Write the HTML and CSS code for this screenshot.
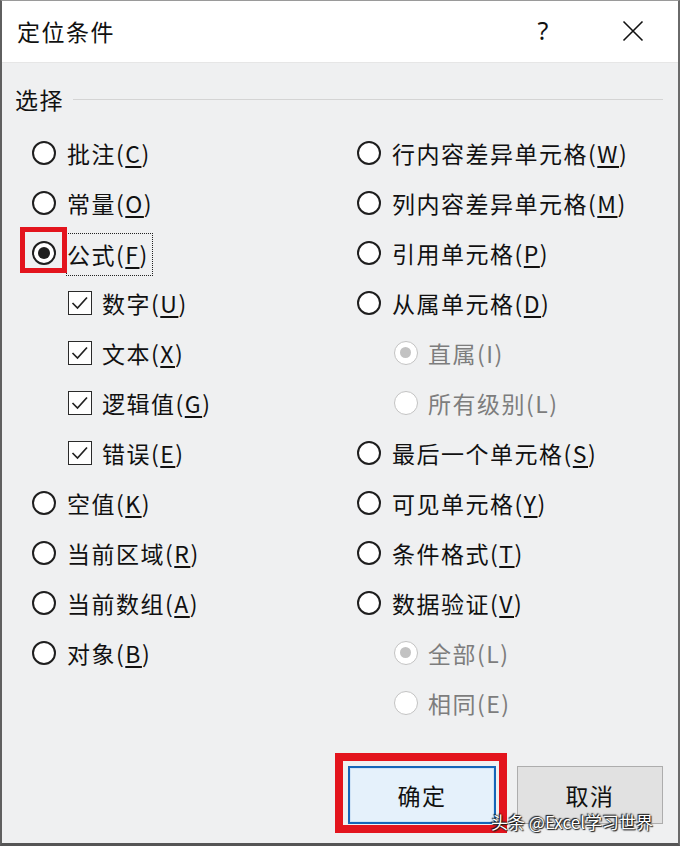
FILE: index.html
```html
<!DOCTYPE html>
<html lang="zh-CN">
<head>
<meta charset="utf-8">
<title>定位条件</title>
<link rel="stylesheet" href="styles.css">
</head>
<body>
<div class="window">
  <div class="titlebar">
    <div class="title">定位条件</div>
    <div class="tbtn help">?</div>
    <div class="tbtn close">
      <svg width="22" height="22" viewBox="0 0 22 22"><path d="M1.5 1.5 L20.5 20.5 M20.5 1.5 L1.5 20.5" stroke="#111" stroke-width="1.6" fill="none"/></svg>
    </div>
  </div>
  <div class="content">
    <div class="legend"><span class="legend-text">选择</span><span class="legend-line"></span></div>
    <div class="grid">
      <div class="col">
        <div class="opt"><span class="radio"></span><span class="lbl">批注(<u>C</u>)</span></div>
        <div class="opt"><span class="radio"></span><span class="lbl">常量(<u>O</u>)</span></div>
        <div class="opt"><span class="radio checked"><span class="mark"></span></span><span class="lbl focus">公式(<u>F</u>)</span></div>
        <div class="opt sub"><span class="check"><svg width="20" height="20" viewBox="0 0 20 20"><path d="M2.5 10 L7.5 15 L17 4.5" stroke="#222" stroke-width="1.7" fill="none"/></svg></span><span class="lbl">数字(<u>U</u>)</span></div>
        <div class="opt sub"><span class="check"><svg width="20" height="20" viewBox="0 0 20 20"><path d="M2.5 10 L7.5 15 L17 4.5" stroke="#222" stroke-width="1.7" fill="none"/></svg></span><span class="lbl">文本(<u>X</u>)</span></div>
        <div class="opt sub"><span class="check"><svg width="20" height="20" viewBox="0 0 20 20"><path d="M2.5 10 L7.5 15 L17 4.5" stroke="#222" stroke-width="1.7" fill="none"/></svg></span><span class="lbl">逻辑值(<u>G</u>)</span></div>
        <div class="opt sub"><span class="check"><svg width="20" height="20" viewBox="0 0 20 20"><path d="M2.5 10 L7.5 15 L17 4.5" stroke="#222" stroke-width="1.7" fill="none"/></svg></span><span class="lbl">错误(<u>E</u>)</span></div>
        <div class="opt"><span class="radio"></span><span class="lbl">空值(<u>K</u>)</span></div>
        <div class="opt"><span class="radio"></span><span class="lbl">当前区域(<u>R</u>)</span></div>
        <div class="opt"><span class="radio"></span><span class="lbl">当前数组(<u>A</u>)</span></div>
        <div class="opt"><span class="radio"></span><span class="lbl">对象(<u>B</u>)</span></div>
      </div>
      <div class="col">
        <div class="opt"><span class="radio"></span><span class="lbl">行内容差异单元格(<u>W</u>)</span></div>
        <div class="opt"><span class="radio"></span><span class="lbl">列内容差异单元格(<u>M</u>)</span></div>
        <div class="opt"><span class="radio"></span><span class="lbl">引用单元格(<u>P</u>)</span></div>
        <div class="opt"><span class="radio"></span><span class="lbl">从属单元格(<u>D</u>)</span></div>
        <div class="opt sub2 disabled"><span class="radio checked"></span><span class="lbl">直属(I)</span></div>
        <div class="opt sub2 disabled"><span class="radio"></span><span class="lbl">所有级别(L)</span></div>
        <div class="opt"><span class="radio"></span><span class="lbl">最后一个单元格(<u>S</u>)</span></div>
        <div class="opt"><span class="radio"></span><span class="lbl">可见单元格(<u>Y</u>)</span></div>
        <div class="opt"><span class="radio"></span><span class="lbl">条件格式(<u>T</u>)</span></div>
        <div class="opt"><span class="radio"></span><span class="lbl">数据验证(<u>V</u>)</span></div>
        <div class="opt sub2 disabled"><span class="radio checked"></span><span class="lbl">全部(L)</span></div>
        <div class="opt sub2 disabled"><span class="radio"></span><span class="lbl">相同(E)</span></div>
      </div>
    </div>
    <div class="buttons">
      <div class="btn primary">确定<span class="hl-btn"></span></div>
      <div class="btn">取消</div>
    </div>
  </div>
  <div class="watermark">头条 @Excel学习世界</div>
</div>
</body>
</html>
```
FILE: styles.css
```css
html, body {
  margin: 0;
  padding: 0;
}
body {
  font-family: "Noto Sans CJK SC", "Microsoft YaHei", sans-serif;
  color: #111;
}
.window {
  position: relative;
  width: 680px;
  height: 846px;
  box-sizing: border-box;
  border-left: 2px solid #5f5f5f;
  border-right: 2px solid #6a6a6a;
  border-bottom: 3px solid #555;
  border-top: 1px solid #9a9a9a;
  background: #eff0f1;
  overflow: hidden;
}
.titlebar {
  height: 61px;
  background: #fff;
  display: flex;
  align-items: center;
  border-bottom: 1px solid #e6e6e6;
}
.title {
  flex: 1;
  padding-left: 15px;
  font-size: 23px;
  letter-spacing: 1.5px;
  margin-top: -1px;
}
.tbtn {
  width: 90px;
  height: 61px;
  display: flex;
  align-items: center;
  justify-content: center;
}
.help {
  font-size: 25px;
  font-family: "Noto Sans", sans-serif;
  margin-top: -4px;
}
.close svg {
  display: block;
  margin-top: -2px;
}
.content {
  padding: 21px 0 0 0;
}
.legend {
  display: flex;
  align-items: center;
  height: 30px;
  padding: 0 15px 0 13px;
}
.legend-text {
  font-size: 23px;
  letter-spacing: 1.5px;
  margin-right: 9px;
}
.legend-line {
  flex: 1;
  height: 1px;
  background: #d4d4d4;
}
.grid {
  display: grid;
  grid-template-columns: 325px 1fr;
  padding: 14px 0 0 30px;
}
.opt {
  display: flex;
  align-items: center;
  height: 50px;
  gap: 11px;
}
.opt.sub {
  padding-left: 36px;
  gap: 10px;
}
.opt.sub2 {
  padding-left: 37px;
  gap: 10px;
}
.lbl {
  font-size: 23px;
  letter-spacing: 1.5px;
  white-space: nowrap;
  line-height: 30px;
}
.lbl u {
  text-decoration-thickness: 1.5px;
  text-underline-offset: 3px;
}
.radio {
  position: relative;
  width: 24px;
  height: 24px;
  box-sizing: border-box;
  border: 2px solid #1e1e1e;
  border-radius: 50%;
  background: #fff;
  flex: none;
}
.radio.checked::after {
  content: "";
  position: absolute;
  left: 4px;
  top: 4px;
  width: 12px;
  height: 12px;
  border-radius: 50%;
  background: #1e1e1e;
}
.radio .mark {
  position: absolute;
  left: -14px;
  top: -16px;
  width: 47px;
  height: 46px;
  box-sizing: border-box;
  border: 5px solid #e3141d;
}
.focus {
  display: inline-flex;
  align-items: center;
  height: 43px;
  box-sizing: border-box;
  border: 1px dotted #222;
  padding: 0 3px 0 0;
  margin-left: -1px;
  margin-top: 2px;
}
.check {
  width: 24px;
  height: 24px;
  box-sizing: border-box;
  border: 1.5px solid #2a2a2a;
  background: #fff;
  flex: none;
  display: flex;
  align-items: center;
  justify-content: center;
}
.check svg {
  display: block;
}
.disabled .lbl {
  color: #7d7d7d;
}
.disabled .radio {
  border: 1.5px solid #c3c3c3;
}
.disabled .radio.checked::after {
  left: 5px;
  top: 5px;
  width: 11px;
  height: 11px;
  background: #c2c2c2;
}
.buttons {
  display: flex;
  justify-content: flex-end;
  gap: 21px;
  padding-right: 15px;
  margin-top: 38px;
}
.btn {
  position: relative;
  width: 146px;
  height: 58px;
  box-sizing: border-box;
  border: 1px solid #adadad;
  background: #e1e1e1;
  display: flex;
  align-items: center;
  justify-content: center;
  font-size: 23px;
  letter-spacing: 1.5px;
}
.btn.primary {
  width: 148px;
  border: 2px solid #1565b8;
  background: #e5f1fb;
  box-shadow: inset 0 0 0 1px #cfe3f6;
}
.hl-btn {
  position: absolute;
  left: -15px;
  top: -15px;
  width: 172px;
  height: 80px;
  box-sizing: border-box;
  border: 8px solid #e3141d;
}
.watermark {
  position: absolute;
  left: 489px;
  top: 808px;
  font-size: 17px;
  color: #fff;
  white-space: nowrap;
  text-shadow: 0 0 2px #000, 1px 1px 1px #222, -1px -1px 1px #222;
}
```
